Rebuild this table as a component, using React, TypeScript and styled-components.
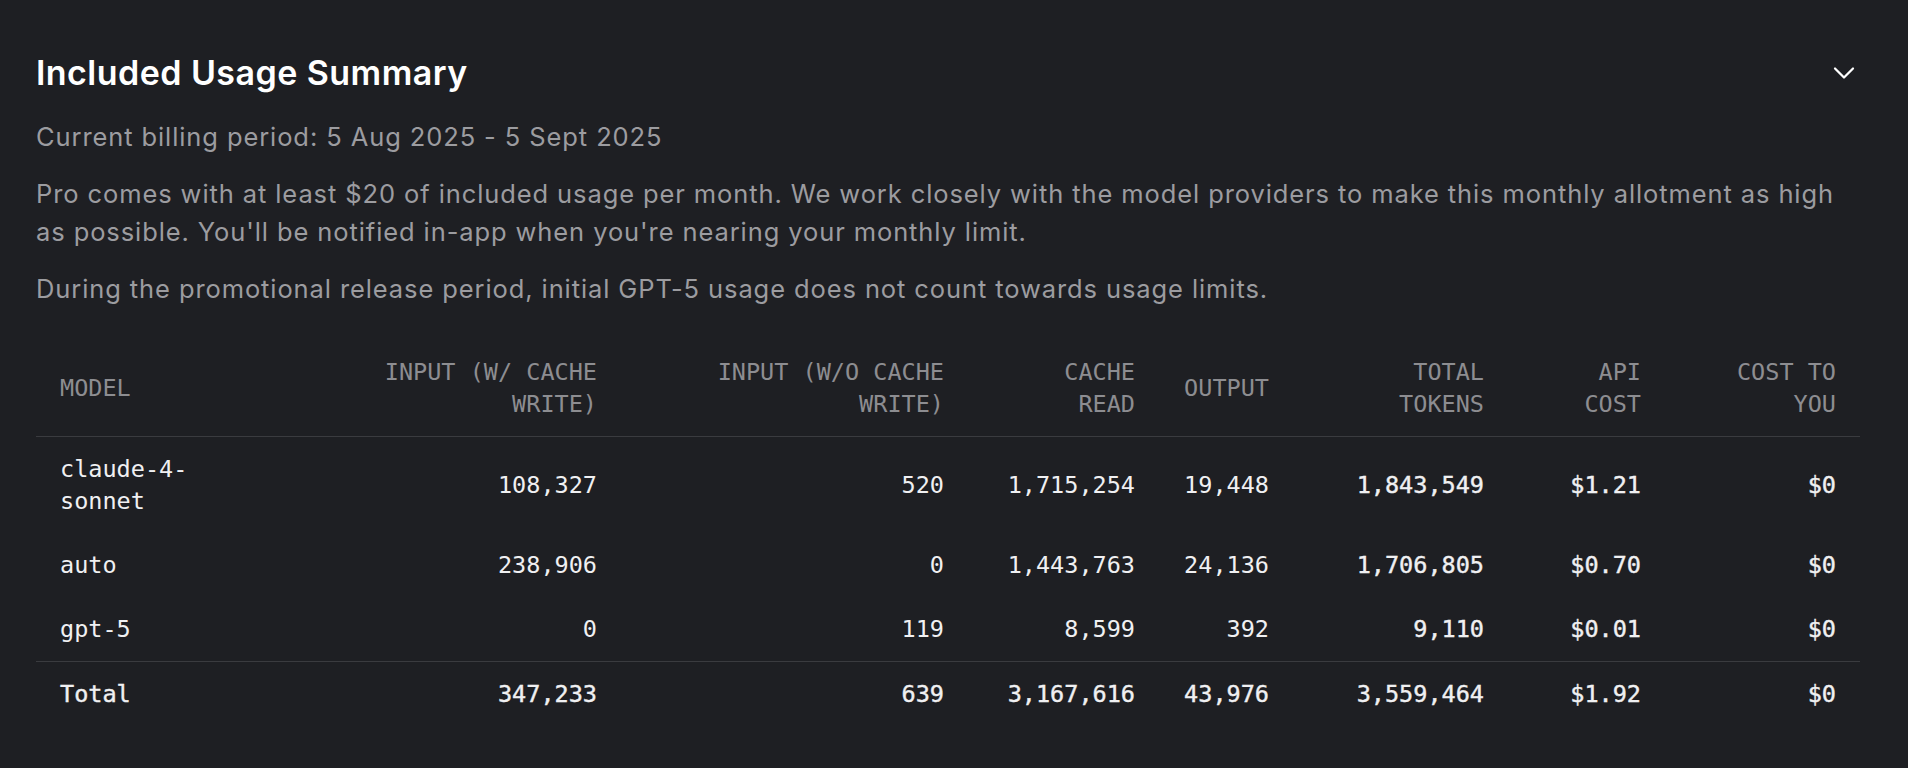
import React from "react";
import styled, { createGlobalStyle } from "styled-components";
import { ChevronDown } from "lucide-react";

const GlobalStyle = createGlobalStyle`
  html, body {
    margin: 0;
    padding: 0;
    background: #1e1f23;
  }
  body {
    font-family: Inter, "Noto Sans", sans-serif;
    -webkit-font-smoothing: antialiased;
  }
`;

type Column = { lines: string[]; width: number; strong?: boolean };

const columns: Column[] = [
  { lines: ["MODEL"], width: 238 },
  { lines: ["INPUT (W/ CACHE", "WRITE)"], width: 347 },
  { lines: ["INPUT (W/O CACHE", "WRITE)"], width: 347 },
  { lines: ["CACHE", "READ"], width: 191 },
  { lines: ["OUTPUT"], width: 134 },
  { lines: ["TOTAL", "TOKENS"], width: 215, strong: true },
  { lines: ["API", "COST"], width: 157, strong: true },
  { lines: ["COST TO", "YOU"], width: 195, strong: true },
];

const rows = [
  ["claude-4-sonnet", "108,327", "520", "1,715,254", "19,448", "1,843,549", "$1.21", "$0"],
  ["auto", "238,906", "0", "1,443,763", "24,136", "1,706,805", "$0.70", "$0"],
  ["gpt-5", "0", "119", "8,599", "392", "9,110", "$0.01", "$0"],
];

const totals = ["Total", "347,233", "639", "3,167,616", "43,976", "3,559,464", "$1.92", "$0"];

export default function App() {
  return (
    <>
      <GlobalStyle />
      <Page>
        <Header>
          <Title>Included Usage Summary</Title>
          <ToggleButton aria-label="Collapse">
            <ChevronDown size={36} strokeWidth={1.5} />
          </ToggleButton>
        </Header>
        <Billing>Current billing period: 5 Aug 2025 - 5 Sept 2025</Billing>
        <Note>
          Pro comes with at least $20 of included usage per month. We work closely with the model
          providers to make this monthly allotment as high as possible. You'll be notified in-app
          when you're nearing your monthly limit.
        </Note>
        <Note>
          During the promotional release period, initial GPT-5 usage does not count towards usage
          limits.
        </Note>

        <UsageTable>
          <colgroup>
            {columns.map((c, i) => (
              <col key={i} style={{ width: c.width }} />
            ))}
          </colgroup>
          <thead>
            <tr>
              {columns.map((c, i) => (
                <HeadCell key={i} $left={i === 0}>
                  {c.lines.map((line, j) => (
                    <React.Fragment key={j}>
                      {j > 0 && <br />}
                      {line}
                    </React.Fragment>
                  ))}
                </HeadCell>
              ))}
            </tr>
          </thead>
          <tbody>
            {rows.map((row) => (
              <tr key={row[0]}>
                {row.map((value, i) => (
                  <Cell key={i} $left={i === 0} $strong={columns[i].strong}>
                    {value}
                  </Cell>
                ))}
              </tr>
            ))}
            <TotalRow>
              {totals.map((value, i) => (
                <Cell key={i} $left={i === 0} $strong>
                  {value}
                </Cell>
              ))}
            </TotalRow>
          </tbody>
        </UsageTable>
      </Page>
    </>
  );
}

const Page = styled.div`
  min-height: 100vh;
  box-sizing: border-box;
  padding: 53px 48px 0 36px;
`;

const Header = styled.div`
  display: flex;
  align-items: center;
  justify-content: space-between;
`;

const Title = styled.h2`
  margin: 0;
  font-size: 34px;
  line-height: 40px;
  font-weight: 600;
  color: #ffffff;
  letter-spacing: 0.45px;
`;

const ToggleButton = styled.button`
  display: flex;
  padding: 0;
  margin-right: -2px;
  border: 0;
  background: none;
  color: #ffffff;
  cursor: pointer;
`;

const Billing = styled.p`
  margin: 25px 0 19px;
  font-size: 25.5px;
  line-height: 38px;
  letter-spacing: 0.9px;
  color: #9c9ca0;
`;

const Note = styled.p`
  margin: 0;
  font-size: 25.5px;
  line-height: 38px;
  letter-spacing: 0.9px;
  color: #9c9ca0;

  & + & {
    margin-top: 19px;
  }
`;

const UsageTable = styled.table`
  width: 100%;
  margin-top: 32px;
  table-layout: fixed;
  border-collapse: collapse;
  font-family: "DejaVu Sans Mono", "Liberation Mono", monospace;
  font-size: 23.5px;
  line-height: 32px;
`;

const HeadCell = styled.th<{ $left?: boolean }>`
  padding: 16px 24px;
  text-align: ${(p) => (p.$left ? "left" : "right")};
  vertical-align: middle;
  font-weight: 400;
  color: #8d8d91;
  white-space: nowrap;
  border-bottom: 1px solid #3a3b3f;
`;

const Cell = styled.td<{ $left?: boolean; $strong?: boolean }>`
  padding: 16px 24px;
  text-align: ${(p) => (p.$left ? "left" : "right")};
  vertical-align: middle;
  color: #f0f0f2;
  white-space: ${(p) => (p.$left ? "normal" : "nowrap")};
  -webkit-text-stroke: ${(p) => (p.$strong ? "0.4px #f0f0f2" : "0")};
`;

const TotalRow = styled.tr`
  border-top: 1px solid #3a3b3f;
`;
